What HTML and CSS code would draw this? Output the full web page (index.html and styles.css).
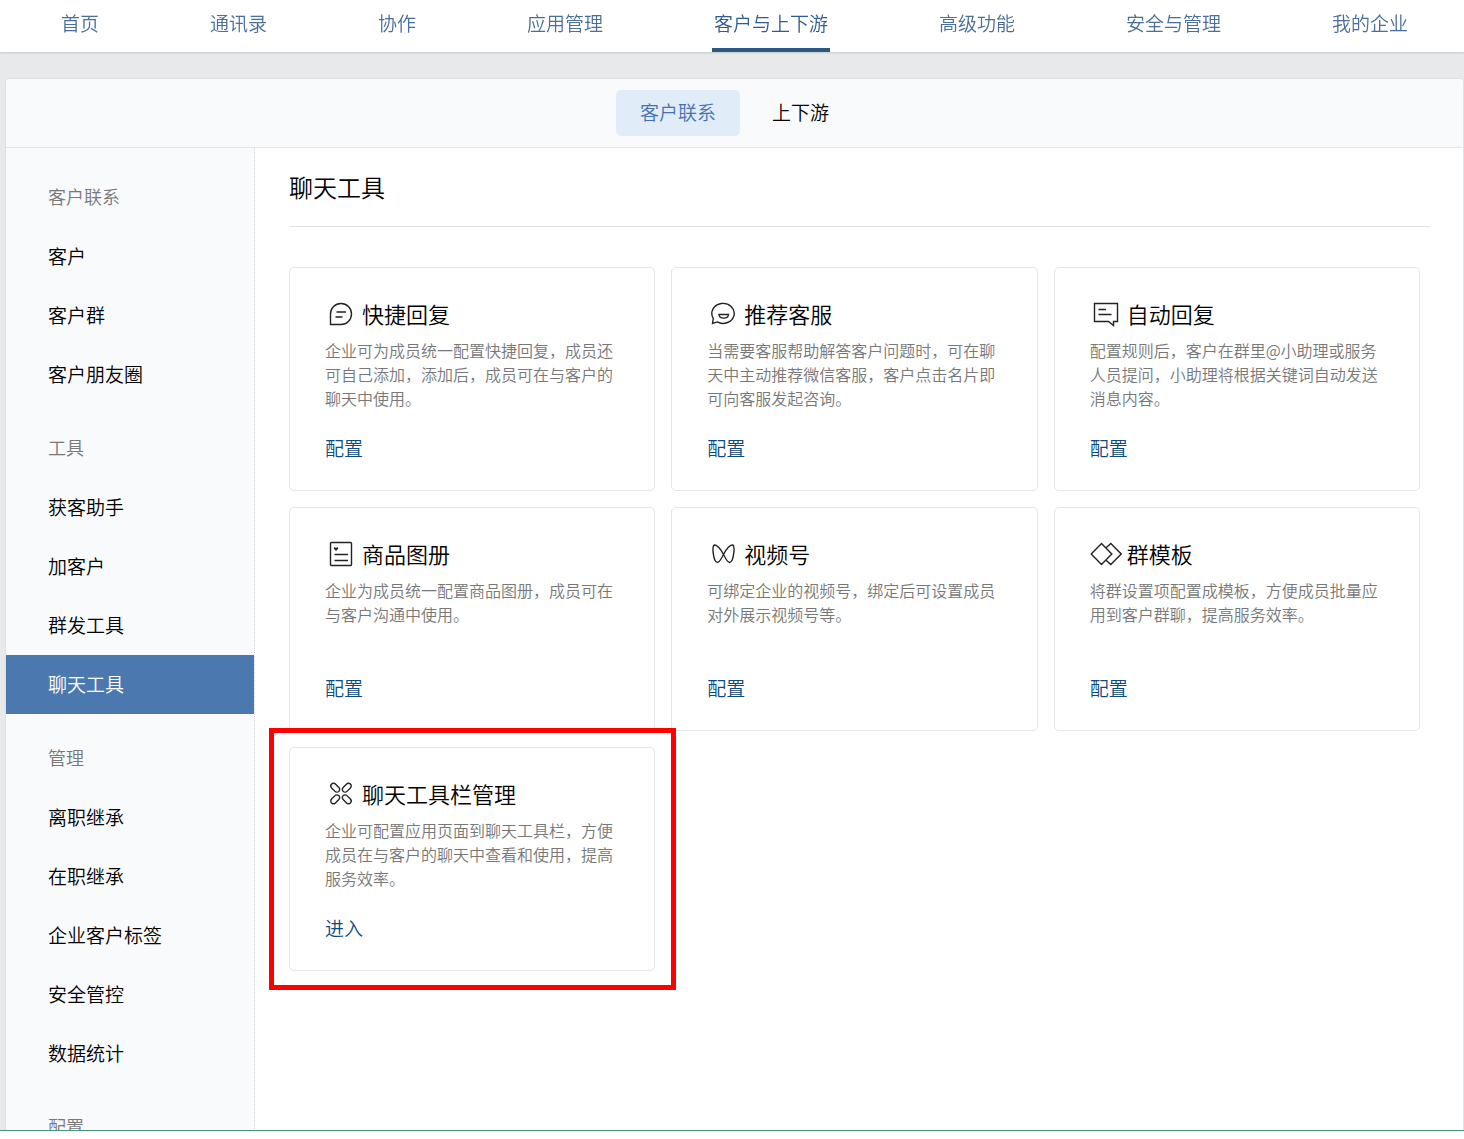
FILE: index.html
```html
<!DOCTYPE html>
<html lang="zh-CN">
<head>
<meta charset="utf-8">
<meta name="viewport" content="width=device-width, initial-scale=1">
<title>聊天工具</title>
<link rel="stylesheet" href="styles.css">
</head>
<body>
<header class="topnav">
  <nav class="topnav-list">
    <a class="topnav-link" href="#">首页</a>
    <a class="topnav-link" href="#">通讯录</a>
    <a class="topnav-link" href="#">协作</a>
    <a class="topnav-link" href="#">应用管理</a>
    <a class="topnav-link is-active" href="#">客户与上下游</a>
    <a class="topnav-link" href="#">高级功能</a>
    <a class="topnav-link" href="#">安全与管理</a>
    <a class="topnav-link" href="#">我的企业</a>
  </nav>
</header>

<div class="viewport">
  <div class="panel">
    <nav class="tabs">
      <a class="tab is-active" href="#">客户联系</a>
      <a class="tab" href="#">上下游</a>
    </nav>
    <div class="panel-body">
      <aside class="sidebar">
        <section class="menu-group">
          <h2 class="menu-title">客户联系</h2>
          <a class="menu-link" href="#">客户</a>
          <a class="menu-link" href="#">客户群</a>
          <a class="menu-link" href="#">客户朋友圈</a>
        </section>
        <section class="menu-group">
          <h2 class="menu-title">工具</h2>
          <a class="menu-link" href="#">获客助手</a>
          <a class="menu-link" href="#">加客户</a>
          <a class="menu-link" href="#">群发工具</a>
          <a class="menu-link is-active" href="#">聊天工具</a>
        </section>
        <section class="menu-group">
          <h2 class="menu-title">管理</h2>
          <a class="menu-link" href="#">离职继承</a>
          <a class="menu-link" href="#">在职继承</a>
          <a class="menu-link" href="#">企业客户标签</a>
          <a class="menu-link" href="#">安全管控</a>
          <a class="menu-link" href="#">数据统计</a>
        </section>
        <section class="menu-group">
          <h2 class="menu-title">配置</h2>
        </section>
      </aside>

      <main class="content">
        <h1 class="page-title">聊天工具</h1>
        <div class="cards">
          <article class="card">
            <h3 class="card-title">
              <svg class="icon" viewBox="0 0 32 32" aria-hidden="true"><path d="M5.5 25.5V15A10.5 10.5 0 1 1 16 25.5ZM11.5 13H21M10.5 18H17.5"/></svg>
              快捷回复
            </h3>
            <p class="card-text">企业可为成员统一配置快捷回复，成员还可自己添加，添加后，成员可在与客户的聊天中使用。</p>
            <a class="card-link" href="#">配置</a>
          </article>
          <article class="card">
            <h3 class="card-title">
              <svg class="icon" viewBox="0 0 32 32" aria-hidden="true"><path d="M5.500 24.500L6.300 19.300A11.200 10 0 1 1 10.200 22.900ZM12 15.500H21.500C21.200 20.300 12.300 20.300 12 15.500Z"/></svg>
              推荐客服
            </h3>
            <p class="card-text">当需要客服帮助解答客户问题时，可在聊天中主动推荐微信客服，客户点击名片即可向客服发起咨询。</p>
            <a class="card-link" href="#">配置</a>
          </article>
          <article class="card">
            <h3 class="card-title">
              <svg class="icon" viewBox="0 0 32 32" aria-hidden="true"><path d="M4.500 4.500H27.500V22.500H23.500V26.500L18.500 22.500H4.500ZM8.500 10.500H16M8.500 15.500H21.500"/></svg>
              自动回复
            </h3>
            <p class="card-text">配置规则后，客户在群里@小助理或服务人员提问，小助理将根据关键词自动发送消息内容。</p>
            <a class="card-link" href="#">配置</a>
          </article>
          <article class="card">
            <h3 class="card-title">
              <svg class="icon" viewBox="0 0 32 32" aria-hidden="true"><rect x="5.500" y="3.500" width="21" height="23" rx="1"/><path d="M9.500 15.500H23M9.500 21.500H23"/><path class="icon-fill" d="M11 12L8.900 9.800C8.400 8.500 10.100 7.700 11 9C11.900 7.700 13.600 8.500 13.100 9.800Z"/></svg>
              商品图册
            </h3>
            <p class="card-text">企业为成员统一配置商品图册，成员可在与客户沟通中使用。</p>
            <a class="card-link" href="#">配置</a>
          </article>
          <article class="card">
            <h3 class="card-title">
              <svg class="icon" viewBox="0 0 32 32" aria-hidden="true"><path d="M16.500 15.500C13.500 9.500 9.500 5.500 7.500 6C4.500 7 6.500 23.500 10.500 23.500C12.500 23.500 14.500 19.500 16.500 15.500C19.500 9.500 23.500 5.500 25.500 6C28.500 7 26.500 23.500 22.500 23.500C20.500 23.500 18.500 19.500 16.500 15.500Z"/></svg>
              视频号
            </h3>
            <p class="card-text">可绑定企业的视频号，绑定后可设置成员对外展示视频号等。</p>
            <a class="card-link" href="#">配置</a>
          </article>
          <article class="card">
            <h3 class="card-title">
              <svg class="icon" viewBox="0 0 32 32" aria-hidden="true"><path d="M11.500 4.500L21.800 15L11.500 25.500L1.200 15ZM16.300 8.500L20.800 4.500L31.200 15L20.800 25.500L16.300 21.500"/></svg>
              群模板
            </h3>
            <p class="card-text">将群设置项配置成模板，方便成员批量应用到客户群聊，提高服务效率。</p>
            <a class="card-link" href="#">配置</a>
          </article>
          <article class="card is-marked">
            <h3 class="card-title">
              <svg class="icon" viewBox="0 0 32 32" aria-hidden="true"><g transform="translate(16 14.500)"><rect x="-2.700" y="-13.300" width="5.400" height="10.300" rx="2.700" transform="rotate(45)"/><rect x="-2.700" y="-13.300" width="5.400" height="10.300" rx="2.700" transform="rotate(135)"/><rect x="-2.700" y="-13.300" width="5.400" height="10.300" rx="2.700" transform="rotate(225)"/><rect x="-2.700" y="-13.300" width="5.400" height="10.300" rx="2.700" transform="rotate(315)"/></g></svg>
              聊天工具栏管理
            </h3>
            <p class="card-text">企业可配置应用页面到聊天工具栏，方便成员在与客户的聊天中查看和使用，提高服务效率。</p>
            <a class="card-link" href="#">进入</a>
          </article>
        </div>
      </main>
    </div>
  </div>
</div>
</body>
</html>
```

FILE: styles.css
```css
* {
  box-sizing: border-box;
}

body {
  margin: 0;
  height: 100vh;
  padding-bottom: 8px;
  display: flex;
  flex-direction: column;
  background: #fff;
  color: #000;
  font-family: "Noto Sans CJK SC", sans-serif;
  font-size: 19px;
  font-weight: 350;
}

a {
  color: inherit;
  text-decoration: none;
}

h1,
h2,
h3,
p {
  margin: 0;
  font-weight: inherit;
}

/* Top navigation */
.topnav {
  flex: none;
  position: relative;
  background: #fff;
  box-shadow: 0 1px 2px rgba(0, 0, 0, 0.15);
}

.topnav-list {
  display: flex;
  justify-content: space-between;
  padding: 0 54px 0 59px;
}

.topnav-link {
  padding: 0 2px 2px;
  line-height: 46px;
  border-bottom: 4px solid transparent;
  color: #4a6f9d;
  white-space: nowrap;
}

.topnav-link.is-active {
  color: #2f5c92;
  border-bottom-color: #2b5782;
}

/* Scrolling page area */
.viewport {
  flex: 1;
  min-height: 0;
  overflow-y: auto;
  scrollbar-width: none;
  padding: 27px 1px 0 6px;
  background: #e8e9eb;
  border-bottom: 1px solid #46937f;
}

.panel {
  background: #fff;
  border-radius: 4px 4px 0 0;
  box-shadow: 0 0 2px rgba(0, 0, 0, 0.14);
}

.tabs {
  display: flex;
  justify-content: center;
  gap: 8px;
  padding: 11px 0;
  background: #f9fafc;
  border-bottom: 1px solid #e2e4e7;
  border-radius: 4px 4px 0 0;
}

.tab {
  padding: 0 24px 2px;
  line-height: 44px;
  border-radius: 5px;
}

.tab.is-active {
  background: #e0ecf8;
  color: #4672b0;
}

.panel-body {
  display: flex;
}

/* Side menu */
.sidebar {
  flex: none;
  width: 249px;
  padding-top: 20px;
  display: flex;
  flex-direction: column;
  gap: 15px;
  background: #f9fafc;
  border-right: 1px dotted #d5d8dc;
}

.menu-title,
.menu-link {
  display: block;
  padding: 0 0 2px 42px;
  line-height: 57px;
}

.menu-title {
  font-size: 18px;
  color: #787878;
}

.menu-link.is-active {
  background: #4a78af;
  color: #fff;
}

/* Main column */
.content {
  flex: 1;
  min-width: 0;
  padding: 16px 33px 40px 34px;
}

.page-title {
  padding-bottom: 16px;
  border-bottom: 1px solid #e2e2e2;
  font-size: 24px;
  line-height: 46px;
}

.cards {
  display: grid;
  grid-template-columns: repeat(3, 1fr);
  gap: 16px;
  margin: 40px 10px 0 0;
}

.card {
  position: relative;
  padding: 31px 35px 30px;
  border: 1px solid #e4e5e7;
  border-radius: 5px;
}

.card-title {
  display: flex;
  align-items: flex-start;
  gap: 5px;
  font-size: 22px;
  line-height: 28px;
}

.icon {
  flex: none;
  width: 32px;
  height: 32px;
  fill: none;
  stroke: #222;
  stroke-width: 1.4;
}

.icon-fill {
  fill: #222;
  stroke: none;
}

.card-text {
  min-height: 72px;
  margin: 7px 0 26px;
  font-size: 16px;
  line-height: 24px;
  color: #787878;
}

.card-link {
  display: block;
  line-height: 24px;
  color: #0d4a80;
}

/* Highlight frame drawn around a card */
.is-marked::after {
  content: "";
  position: absolute;
  inset: -20px -22px -20px -21px;
  border: 5px solid #f00;
  pointer-events: none;
}
```
